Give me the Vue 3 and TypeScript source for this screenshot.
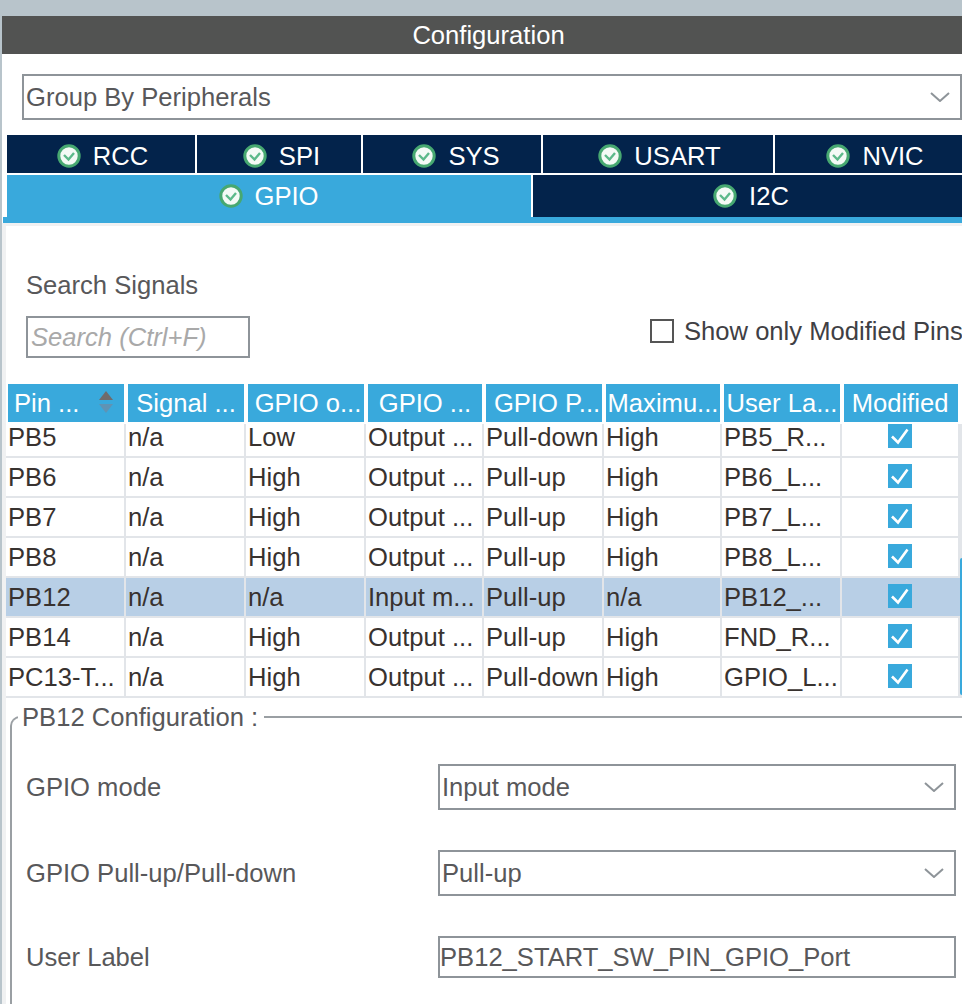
<script setup lang="ts">
interface Tab { name: string; width: number; shift: number }
const topTabs: Tab[] = [
  { name: 'RCC', width: 188, shift: 3 },
  { name: 'SPI', width: 164, shift: 5 },
  { name: 'SYS', width: 178, shift: 8 },
  { name: 'USART', width: 230, shift: 3 },
  { name: 'NVIC', width: 198, shift: 2 }
]
const headers = ['Signal ...', 'GPIO o...', 'GPIO ...', 'GPIO P...', 'Maximu...', 'User La...', 'Modified']
const rows: string[][] = [
  ['PB5', 'n/a', 'Low', 'Output ...', 'Pull-down', 'High', 'PB5_R...'],
  ['PB6', 'n/a', 'High', 'Output ...', 'Pull-up', 'High', 'PB6_L...'],
  ['PB7', 'n/a', 'High', 'Output ...', 'Pull-up', 'High', 'PB7_L...'],
  ['PB8', 'n/a', 'High', 'Output ...', 'Pull-up', 'High', 'PB8_L...'],
  ['PB12', 'n/a', 'n/a', 'Input m...', 'Pull-up', 'n/a', 'PB12_...'],
  ['PB14', 'n/a', 'High', 'Output ...', 'Pull-up', 'High', 'FND_R...'],
  ['PC13-T...', 'n/a', 'High', 'Output ...', 'Pull-down', 'High', 'GPIO_L...']
]
</script>

<template>
  <div class="page">
    <main class="panel">
      <header class="title">Configuration</header>

      <div class="select group">
        <span>Group By Peripherals</span>
        <svg class="chev" width="20" height="10" viewBox="0 0 20 10"><polyline points="1,1 10,9 19,1" /></svg>
      </div>

      <div class="tabbar">
        <div class="tabrow top">
          <div v-for="t in topTabs" :key="t.name" class="tab" :style="{ width: t.width + 'px', paddingLeft: t.shift + 'px' }">
            <svg class="ok" width="24" height="24" viewBox="0 0 24 24"><circle cx="12" cy="12" r="10.2" /><polyline points="7,11 11.5,15.5 17,9" /></svg>
            <span>{{ t.name }}</span>
          </div>
        </div>
        <div class="tabrow bottom">
          <div class="tab active">
            <svg class="ok" width="24" height="24" viewBox="0 0 24 24"><circle cx="12" cy="12" r="10.2" /><polyline points="7,11 11.5,15.5 17,9" /></svg>
            <span>GPIO</span>
          </div>
          <div class="tab i2c">
            <svg class="ok" width="24" height="24" viewBox="0 0 24 24"><circle cx="12" cy="12" r="10.2" /><polyline points="7,11 11.5,15.5 17,9" /></svg>
            <span>I2C</span>
          </div>
        </div>
      </div>

      <section class="content">
        <div class="search-label">Search Signals</div>
        <div class="search-row">
          <div class="search-box">Search (Ctrl+F)</div>
          <label class="only-mod">
            <span class="box"></span>
            <span>Show only Modified Pins</span>
          </label>
        </div>

        <div class="table">
          <div class="grid head">
            <div class="th pin">
              <span>Pin ...</span>
              <svg class="sort" width="16" height="24" viewBox="0 0 16 24">
                <polygon points="8,1 15,10 1,10" fill="#6f6b6c" />
                <polygon points="1,14 15,14 8,23" fill="#5f93b4" />
              </svg>
            </div>
            <div v-for="h in headers" :key="h" class="th">{{ h }}</div>
          </div>
          <div class="body">
            <div v-for="(r, i) in rows" :key="r[0]" class="grid row" :class="{ selected: r[0] === 'PB12', first: i === 0 }">
              <div v-for="(c, j) in r" :key="j" class="td">{{ c }}</div>
              <div class="td check">
                <svg width="24" height="24" viewBox="0 0 24 24"><rect width="24" height="24" fill="#39a9dc" /><polyline points="4,12.5 10,18.5 19.5,5.5" fill="none" stroke="#fff" stroke-width="2.6" /></svg>
              </div>
            </div>
            <div class="scroll-thumb"></div>
          </div>
        </div>

        <fieldset class="config">
          <legend>PB12 Configuration :</legend>
          <div class="form-row r1">
            <span class="label">GPIO mode</span>
            <div class="select field">
              <span>Input mode</span>
              <svg class="chev" width="20" height="10" viewBox="0 0 20 10"><polyline points="1,1 10,9 19,1" /></svg>
            </div>
          </div>
          <div class="form-row r2">
            <span class="label">GPIO Pull-up/Pull-down</span>
            <div class="select field">
              <span>Pull-up</span>
              <svg class="chev" width="20" height="10" viewBox="0 0 20 10"><polyline points="1,1 10,9 19,1" /></svg>
            </div>
          </div>
          <div class="form-row r3">
            <span class="label">User Label</span>
            <div class="text-input">PB12_START_SW_PIN_GPIO_Port</div>
          </div>
        </fieldset>
      </section>
    </main>
  </div>
</template>

<style>
html, body { margin: 0; background: #fff; }
</style>

<style scoped>
.page {
  width: 962px;
  height: 1004px;
  box-sizing: border-box;
  padding: 16px 0 0 2px;
  background: #b8c4cb;
  overflow: hidden;
  font-family: "Liberation Sans", Arial, sans-serif;
  font-size: 25.6px;
  color: #58585a;
}
.panel { background: #fff; height: 988px; overflow: hidden; }
.title {
  height: 38px;
  line-height: 38px;
  background: #525352;
  color: #fff;
  text-align: center;
  padding-left: 13px;
}
.select {
  display: flex;
  align-items: center;
  justify-content: space-between;
  box-sizing: border-box;
  height: 46px;
  border: 2px solid #8e9499;
  background: #fff;
  padding: 0 10px 0 2px;
}
.group { margin: 20px 0 15px 20px; }
.chev { fill: none; stroke: #8e9499; stroke-width: 2; }
.tabbar {
  margin-left: 1px;
  padding-left: 4px;
  border-bottom: 6px solid #39a9dc;
  display: flex;
  flex-direction: column;
  gap: 2px;
}
.tabrow { display: flex; gap: 2px; }
.tab {
  display: flex;
  flex: none;
  align-items: center;
  justify-content: center;
  gap: 12px;
  background: #03234b;
  color: #fff;
  box-sizing: border-box;
}
.top .tab { height: 38px; padding-top: 4px; }
.bottom .tab { height: 42px; }
.active { width: 524px; padding-right: 1px; background: #39a9dc; }
.i2c { width: 436px; }
.ok circle { fill: #f4faf6; stroke: #47a871; stroke-width: 3; }
.ok polyline { fill: none; stroke: #5cb98a; stroke-width: 2.4; }
.content {
  border-left: 4px solid #f0f1f2;
  border-top: 3px solid #f0f1f2;
}
.search-label { padding: 44px 0 0 20px; line-height: 30px; margin-bottom: 16px; }
.search-row { display: flex; justify-content: space-between; padding-left: 20px; }
.search-box {
  box-sizing: border-box;
  width: 224px;
  height: 42px;
  line-height: 38px;
  border: 2px solid #8e9499;
  padding-left: 3px;
  font-style: italic;
  color: #a9a9a9;
}
.only-mod {
  display: flex;
  flex: none;
  width: 312px;
  align-items: center;
  gap: 10px;
  white-space: nowrap;
  height: 30px;
  color: #3f4044;
}
.box { box-sizing: border-box; flex: none; width: 24px; height: 24px; border: 2px solid #555; background: #fff; }
.table { margin-top: 26px; }
.grid {
  display: grid;
  grid-template-columns: 120px 120px 120px 118px 120px 118px 120px 116px;
}
.head { height: 38px; margin-bottom: 2px; }
.th {
  margin: 0 2px;
  background: #39a9dc;
  color: #fff;
  line-height: 38px;
  text-align: center;
  white-space: nowrap;
  overflow: hidden;
}
.th:nth-child(3) { padding-left: 4px; }
.th:nth-child(5) { padding-left: 6px; }
.th:last-child { margin-right: 0; padding-right: 2px; }
.pin { display: flex; align-items: center; justify-content: space-between; padding: 0 10px 0 6px; }
.pin span { display: block; }
.sort { flex: none; margin-top: -2px; }
.body { position: relative; width: 956px; height: 274px; overflow: hidden; background: linear-gradient(#e2e5e9, #e2e5e9) right / 4px 100% no-repeat; }
.row { height: 38px; margin-bottom: 2px; color: #38322f; box-shadow: 0 2px 0 #e2e5e9; }
.row.first { margin-top: -6px; }
.row.selected { background: #b8cfe6; }
.td {
  line-height: 38px;
  padding-left: 2px;
  border-right: 2px solid #e2e5e9;
  white-space: nowrap;
  overflow: hidden;
}
.check {
  display: flex;
  align-items: center;
  justify-content: center;
  padding: 0;
  border-right: 0;
}
.check svg { margin-top: -2px; }
.scroll-thumb {
  position: absolute;
  right: 0;
  top: 134px;
  width: 2px;
  height: 137px;
  background: #39a9dc;
  border-radius: 2px 0 0 2px;
}
.config {
  margin: 4px 0 0 4px;
  padding: 32px 6px 40px 14px;
  border: 0;
  border-top: 2px solid #9a9fa3;
  border-left: 2px solid #9a9fa3;
  border-top-left-radius: 10px;
  min-width: 0;
}
.config legend { margin-left: -8px; padding: 0 6px 0 4px; line-height: 30px; }
.form-row { display: flex; align-items: center; }
.r1, .r2 { margin-bottom: 40px; }
.label { width: 412px; flex: none; }
.field { width: 518px; }
.text-input {
  box-sizing: border-box;
  width: 518px;
  height: 42px;
  line-height: 38px;
  border: 2px solid #8e9499;
  padding-left: 0;
}
</style>
